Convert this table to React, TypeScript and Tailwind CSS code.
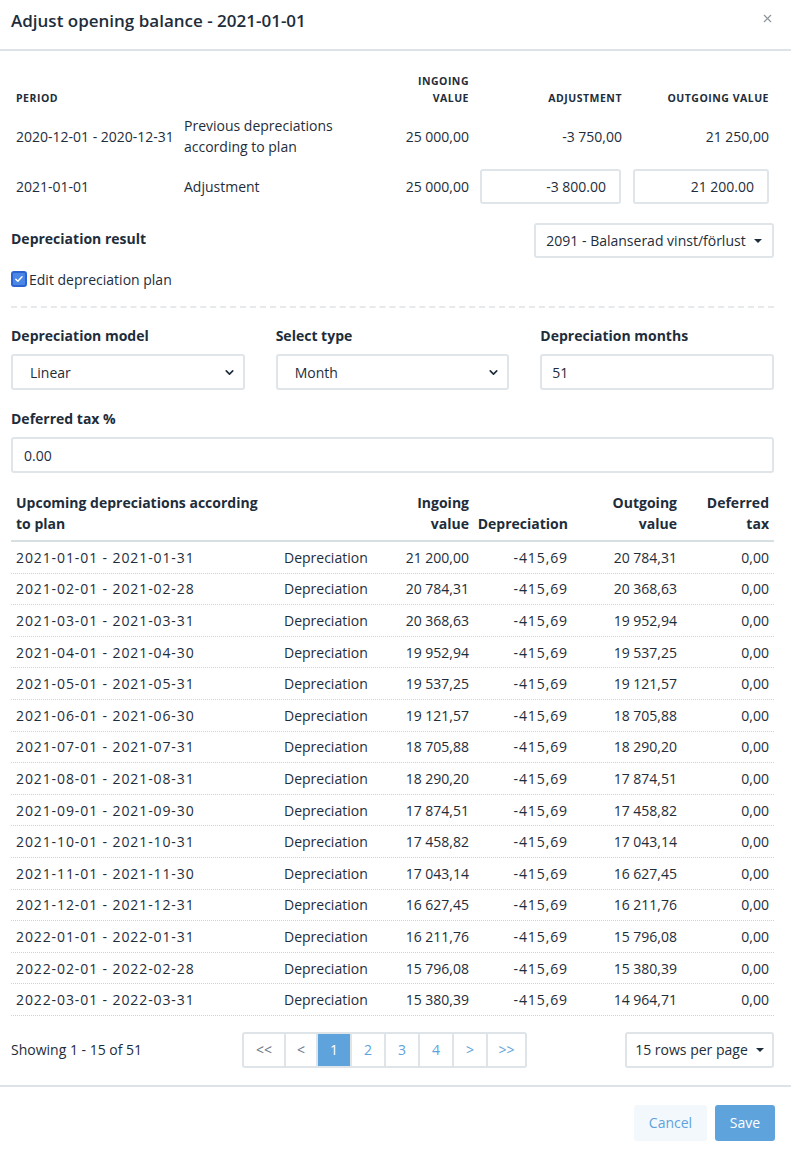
import { ChevronDown, X } from "lucide-react";

const ingoing = [
  "21 200,00", "20 784,31", "20 368,63", "19 952,94", "19 537,25", "19 121,57", "18 705,88", "18 290,20",
  "17 874,51", "17 458,82", "17 043,14", "16 627,45", "16 211,76", "15 796,08", "15 380,39", "14 964,71",
];

const periods = [
  "2021-01-01 - 2021-01-31", "2021-02-01 - 2021-02-28", "2021-03-01 - 2021-03-31", "2021-04-01 - 2021-04-30",
  "2021-05-01 - 2021-05-31", "2021-06-01 - 2021-06-30", "2021-07-01 - 2021-07-31", "2021-08-01 - 2021-08-31",
  "2021-09-01 - 2021-09-30", "2021-10-01 - 2021-10-31", "2021-11-01 - 2021-11-30", "2021-12-01 - 2021-12-31",
  "2022-01-01 - 2022-01-31", "2022-02-01 - 2022-02-28", "2022-03-01 - 2022-03-31",
];

const pages = [
  { label: "<<", w: "w-[40px]", tone: "text-[#6b7785]" },
  { label: "<", w: "w-[32px]", tone: "text-[#6b7785]" },
  { label: "1", w: "w-[34px]", tone: "bg-[#5ea3dc] text-white" },
  { label: "2", w: "w-[34px]", tone: "text-[#5ea3dc]" },
  { label: "3", w: "w-[34px]", tone: "text-[#5ea3dc]" },
  { label: "4", w: "w-[34px]", tone: "text-[#5ea3dc]" },
  { label: ">", w: "w-[34px]", tone: "text-[#5ea3dc]" },
  { label: ">>", w: "w-[39px]", tone: "text-[#5ea3dc]" },
];

function Caret() {
  return <span className="ml-2 inline-block border-x-[4px] border-t-[4px] border-x-transparent border-t-[#1e2d3b]" />;
}

export default function App() {
  return (
    <div className="w-[791px] h-[1149px] bg-white text-[#1e2d3b] font-['Open_Sans','Noto_Sans',sans-serif] text-[14px] overflow-hidden">
      {/* header */}
      <div className="h-[51px] flex items-center justify-between pl-[11px] pr-[17px] border-b-2 border-[#dde3e8]">
        <h1 className="text-[17px] font-semibold pb-[7px]">Adjust opening balance - 2021-01-01</h1>
        <X className="w-[13px] h-[13px] text-[#8a949c] mb-[12px]" strokeWidth={2} />
      </div>

      <div className="pl-[11px] pr-[17px]">
        {/* opening balance table */}
        <div className="pt-[20px]">
          <div className="flex items-end h-[36px] text-[10.5px] font-bold uppercase tracking-[0.5px] leading-[17px]">
            <div className="w-[168px] pl-[5px]">Period</div>
            <div className="flex-1" />
            <div className="w-[82px] pr-[5px] text-right">Ingoing<br />value</div>
            <div className="w-[153px] pr-[5px] text-right">Adjustment</div>
            <div className="w-[147px] pr-[5px] text-right">Outgoing value</div>
          </div>
          <div className="flex items-center h-[58px]">
            <div className="w-[168px] pl-[5px] whitespace-nowrap">2020-12-01 - 2020-12-31</div>
            <div className="flex-1 pl-[5px] leading-[21px]">Previous depreciations<br />according to plan</div>
            <div className="w-[82px] pr-[5px] text-right">25 000,00</div>
            <div className="w-[153px] pr-[5px] text-right">-3 750,00</div>
            <div className="w-[147px] pr-[5px] text-right">21 250,00</div>
          </div>
          <div className="flex items-center h-[42px]">
            <div className="w-[168px] pl-[5px]">2021-01-01</div>
            <div className="flex-1 pl-[5px]">Adjustment</div>
            <div className="w-[82px] pr-[5px] text-right">25 000,00</div>
            <div className="w-[153px] pl-[6px] pr-[6px]">
              <div className="h-[35px] border-2 border-[#dfe5e9] rounded-[3px] flex items-center justify-end pr-[13px]">-3 800.00</div>
            </div>
            <div className="w-[147px] pl-[6px] pr-[5px]">
              <div className="h-[35px] border-2 border-[#dfe5e9] rounded-[3px] flex items-center justify-end pr-[13px]">21 200.00</div>
            </div>
          </div>
        </div>

        {/* depreciation result */}
        <div className="flex items-center justify-between mt-[16px]">
          <div className="font-bold pb-[4px]">Depreciation result</div>
          <div className="w-[240px] h-[35px] border-2 border-[#dfe5e9] rounded-[3px] flex items-center justify-center">
            2091 - Balanserad vinst/förlust
            <Caret />
          </div>
        </div>

        <label className="flex items-center mt-[12px] h-[18px]">
          <span className="w-[16px] h-[16px] rounded-[3px] border-[2px] border-[#2b63d1] bg-[#4a86e6] flex items-center justify-center">
            <svg viewBox="0 0 12 12" className="w-[10px] h-[10px]"><path d="M2.2 6.3l2.4 2.4 5-5.4" fill="none" stroke="white" strokeWidth="1.8" strokeLinecap="round" strokeLinejoin="round" /></svg>
          </span>
          <span className="ml-[2px]">Edit depreciation plan</span>
        </label>

        <div className="mt-[18px] border-t-2 border-dashed border-[#e6eaed]" />

        {/* plan settings */}
        <div className="grid grid-cols-3 gap-x-[31px] mt-[17px]">
          {[
            { label: "Depreciation model", value: "Linear", select: true },
            { label: "Select type", value: "Month", select: true },
            { label: "Depreciation months", value: "51", select: false },
          ].map((f) => (
            <div key={f.label}>
              <div className="font-bold h-[19px]">{f.label}</div>
              <div className="mt-[10px] h-[36px] border-2 border-[#dfe5e9] rounded-[3px] flex items-center justify-between pl-[17px] pr-[7px]">
                <span className={f.select ? "" : "-ml-[7px]"}>{f.value}</span>
                {f.select && <ChevronDown className="w-[13px] h-[13px]" strokeWidth={3} />}
              </div>
            </div>
          ))}
        </div>

        <div className="mt-[18px] font-bold h-[19px]">Deferred tax %</div>
        <div className="mt-[10px] h-[36px] border-2 border-[#dfe5e9] rounded-[3px] flex items-center pl-[11px]">0.00</div>

        {/* upcoming depreciations */}
        <div className="mt-[19px]">
          <div className="flex items-end font-bold leading-[21px] pb-[6px] border-b-2 border-[#d6e0e3]">
            <div className="w-[268px] pl-[5px]">Upcoming depreciations according<br />to plan</div>
            <div className="w-[111px]" />
            <div className="w-[84px] pr-[5px] text-right">Ingoing<br />value</div>
            <div className="w-[99px] pr-[5px] text-right">Depreciation</div>
            <div className="w-[109px] pr-[5px] text-right">Outgoing<br />value</div>
            <div className="flex-1 pr-[5px] text-right">Deferred<br />tax</div>
          </div>
          {periods.map((p, i) => (
            <div key={p} className="flex items-center h-[31.6px] border-b border-dotted border-[#c9d3da]">
              <div className="w-[268px] pl-[5px] tracking-[0.9px]">{p}</div>
              <div className="w-[111px] pl-[5px]">Depreciation</div>
              <div className="w-[84px] pr-[5px] text-right">{ingoing[i]}</div>
              <div className="w-[99px] pr-[5px] text-right tracking-[0.9px]">-415,69</div>
              <div className="w-[109px] pr-[5px] text-right">{ingoing[i + 1]}</div>
              <div className="flex-1 pr-[5px] text-right">0,00</div>
            </div>
          ))}
        </div>

        {/* pagination */}
        <div className="flex items-center justify-between mt-[16px] h-[36px]">
          <div className="w-[231px]">Showing 1 - 15 of 51</div>
          <div className="flex h-[36px] border-2 border-[#dfe4e8] rounded-[3px] overflow-hidden">
            {pages.map((p, i) => (
              <div
                key={p.label}
                className={`${p.w} ${p.tone} flex items-center justify-center ${i > 0 ? "border-l-2 border-[#dfe4e8]" : ""}`}
              >
                {p.label}
              </div>
            ))}
          </div>
          <div className="flex-1" />
          <div className="w-[149px] h-[36px] border-2 border-[#dfe4e8] rounded-[3px] flex items-center justify-center">
            15 rows per page
            <Caret />
          </div>
        </div>
      </div>

      {/* footer */}
      <div className="mt-[17px] border-t-2 border-[#dde3e8]" />
      <div className="flex justify-end gap-[8px] pr-[16px] pt-[18px]">
        <button className="w-[73px] h-[36px] rounded-[3px] bg-[#f3f8fc] text-[#5ea3dc]">Cancel</button>
        <button className="w-[60px] h-[36px] rounded-[3px] bg-[#5ea3dc] text-white">Save</button>
      </div>
    </div>
  );
}
